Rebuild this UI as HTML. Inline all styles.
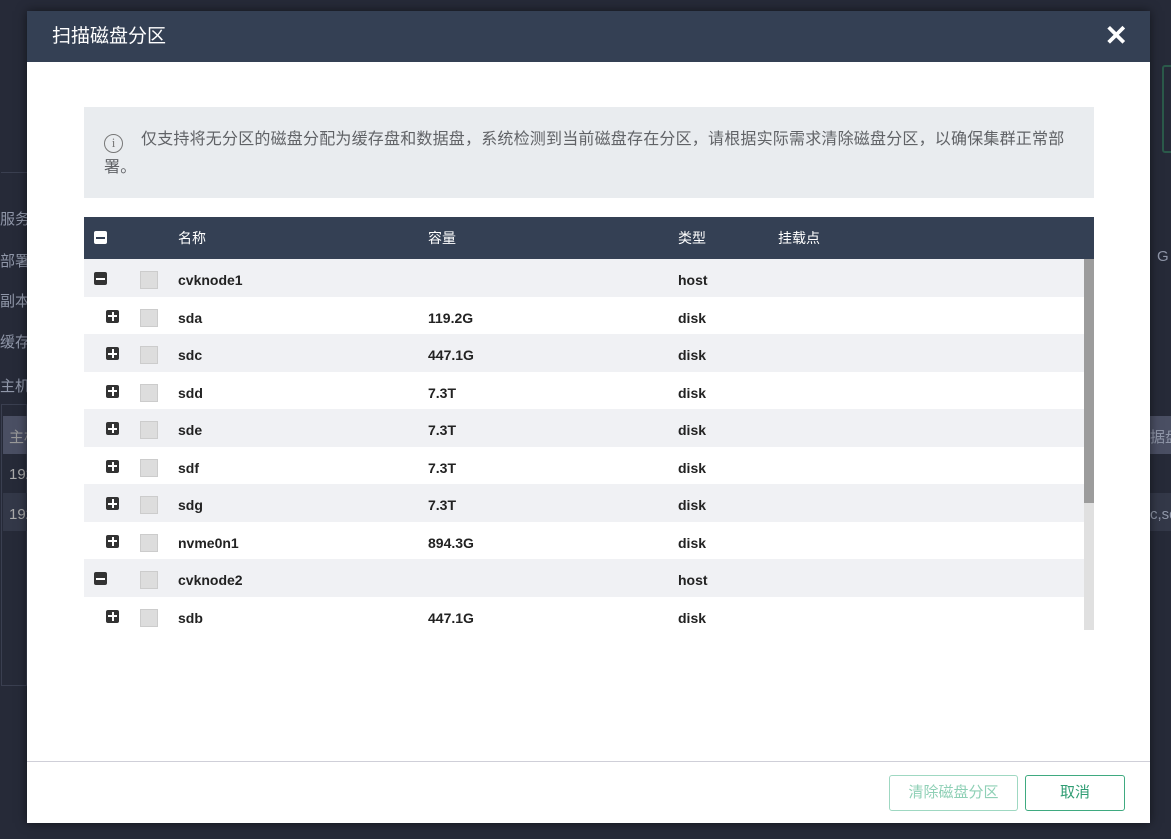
<!DOCTYPE html>
<html><head><meta charset="utf-8"><style>
*{margin:0;padding:0;box-sizing:border-box}
body{width:1171px;height:839px;background:#262a38;position:relative;overflow:hidden;font-family:"Liberation Sans","Noto Sans CJK SC",sans-serif}
.bg{position:absolute;color:#8f96a8;font-size:15px;white-space:nowrap}
.modal{position:absolute;left:27px;top:11px;width:1123px;height:812px;background:#fff;box-shadow:0 0 10px rgba(0,0,0,.5)}
.hd{height:51px;background:#344054;color:#fff;font-size:19px;line-height:51px;padding-left:25px}
.x{position:absolute;right:22px;top:12px;color:#fff;font-size:28px;font-weight:bold;line-height:26px}
.info{position:absolute;left:57px;top:96px;width:1010px;height:91px;background:#e9ecef;color:#606266;font-size:16px;letter-spacing:.2px;line-height:28px;padding:19px 14px 0 20px}
.info .i{display:inline-block;width:19px;height:19px;border:1.5px solid #777;border-radius:50%;text-align:center;font-size:13px;line-height:16px;color:#777;vertical-align:-3px;margin-right:18px;font-family:"Liberation Serif",serif;letter-spacing:0}
.th{position:absolute;left:57px;top:206px;width:1010px;height:42px;background:#344054;color:#fff;font-size:14px;line-height:42px}
.th span,.row span{position:absolute}
.body{position:absolute;left:57px;top:248px;width:1010px;height:371px;overflow:hidden}
.row{position:relative;height:37.5px;line-height:43px;font-size:14px;font-weight:bold;color:#222;width:1000px}
.row.g{background:#f0f1f4}
.ic{position:absolute;width:13px;height:13px;background:#333;border-radius:2px;top:13px}
.ic:before{content:"";position:absolute;left:2px;top:5.5px;width:9px;height:2px;background:#fff}
.ic.p:after{content:"";position:absolute;left:5.5px;top:2px;width:2px;height:9px;background:#fff}
.cb{position:absolute;left:56px;top:12px;width:18px;height:18px;background:#ddd;border:1px solid #ccc}
.sb{position:absolute;left:1000px;top:0;width:10px;height:371px;background:#e0e0e0}
.sb div{height:244px;background:#9c9c9c}
.ft{position:absolute;left:0;top:750px;width:1123px;border-top:1px solid #cfcfd8}
.btn{position:absolute;top:764px;height:36px;border:1px solid;border-radius:3px;font-size:15px;text-align:center;line-height:34px;background:#fff}
</style></head><body>
<div class="bg" style="left:0;top:208px">服务</div>
<div class="bg" style="left:0;top:250px">部署</div>
<div class="bg" style="left:0;top:290px">副本</div>
<div class="bg" style="left:0;top:331px">缓存</div>
<div class="bg" style="left:0;top:375px">主机</div>
<div style="position:absolute;left:1px;top:172px;width:26px;height:1px;background:#3a3f50"></div>
<div style="position:absolute;left:1px;top:404px;width:26px;height:282px;border:1px solid #3a3f50"></div>
<div style="position:absolute;left:3px;top:416px;width:24px;height:38px;background:#4a4f63"></div>
<div style="position:absolute;left:3px;top:493px;width:24px;height:38px;background:#333848"></div>
<div class="bg" style="left:9px;top:426px;color:#999">主机</div>
<div class="bg" style="left:9px;top:466px;color:#aaa">192</div>
<div class="bg" style="left:9px;top:506px;color:#aaa">192</div>
<div style="position:absolute;left:1162px;top:65px;width:12px;height:88px;border:2px solid #2b5a4a;border-radius:3px"></div>
<div style="position:absolute;left:1150px;top:416px;width:21px;height:38px;background:#4a4f63"></div>
<div style="position:absolute;left:1150px;top:493px;width:21px;height:38px;background:#333848"></div>
<div class="bg" style="left:1150px;top:426px">据盘</div>
<div class="bg" style="left:1150px;top:506px">c,sd</div>
<div class="bg" style="left:1157px;top:248px">G</div>
<div class="modal">
<div class="hd">扫描磁盘分区</div><div class="x">✕</div>
<div class="info"><span class="i">i</span>仅支持将无分区的磁盘分配为缓存盘和数据盘，系统检测到当前磁盘存在分区，请根据实际需求清除磁盘分区，以确保集群正常部署。</div>
<div class="th"><div class="ic" style="left:10px;top:14px;background:#fff;"><div style="position:absolute;left:2px;top:5.5px;width:9px;height:2px;background:#344054"></div></div>
<span style="left:94px">名称</span><span style="left:344px">容量</span><span style="left:594px">类型</span><span style="left:694px">挂载点</span></div>
<div class="body">
<div class="row g"><div class="ic" style="left:10px"></div><div class="cb"></div><span style="left:94px">cvknode1</span><span style="left:594px">host</span></div>
<div class="row"><div class="ic p" style="left:22px"></div><div class="cb"></div><span style="left:94px">sda</span><span style="left:344px">119.2G</span><span style="left:594px">disk</span></div>
<div class="row g"><div class="ic p" style="left:22px"></div><div class="cb"></div><span style="left:94px">sdc</span><span style="left:344px">447.1G</span><span style="left:594px">disk</span></div>
<div class="row"><div class="ic p" style="left:22px"></div><div class="cb"></div><span style="left:94px">sdd</span><span style="left:344px">7.3T</span><span style="left:594px">disk</span></div>
<div class="row g"><div class="ic p" style="left:22px"></div><div class="cb"></div><span style="left:94px">sde</span><span style="left:344px">7.3T</span><span style="left:594px">disk</span></div>
<div class="row"><div class="ic p" style="left:22px"></div><div class="cb"></div><span style="left:94px">sdf</span><span style="left:344px">7.3T</span><span style="left:594px">disk</span></div>
<div class="row g"><div class="ic p" style="left:22px"></div><div class="cb"></div><span style="left:94px">sdg</span><span style="left:344px">7.3T</span><span style="left:594px">disk</span></div>
<div class="row"><div class="ic p" style="left:22px"></div><div class="cb"></div><span style="left:94px">nvme0n1</span><span style="left:344px">894.3G</span><span style="left:594px">disk</span></div>
<div class="row g"><div class="ic" style="left:10px"></div><div class="cb"></div><span style="left:94px">cvknode2</span><span style="left:594px">host</span></div>
<div class="row"><div class="ic p" style="left:22px"></div><div class="cb"></div><span style="left:94px">sdb</span><span style="left:344px">447.1G</span><span style="left:594px">disk</span></div>
<div class="sb"><div></div></div>
</div>
<div class="ft"></div>
<div class="btn" style="left:862px;width:129px;color:#8fd0b6;border-color:#9fd8c2">清除磁盘分区</div>
<div class="btn" style="left:998px;width:100px;color:#2f9d73;border-color:#3faa80">取消</div>
</div>
</body></html>
